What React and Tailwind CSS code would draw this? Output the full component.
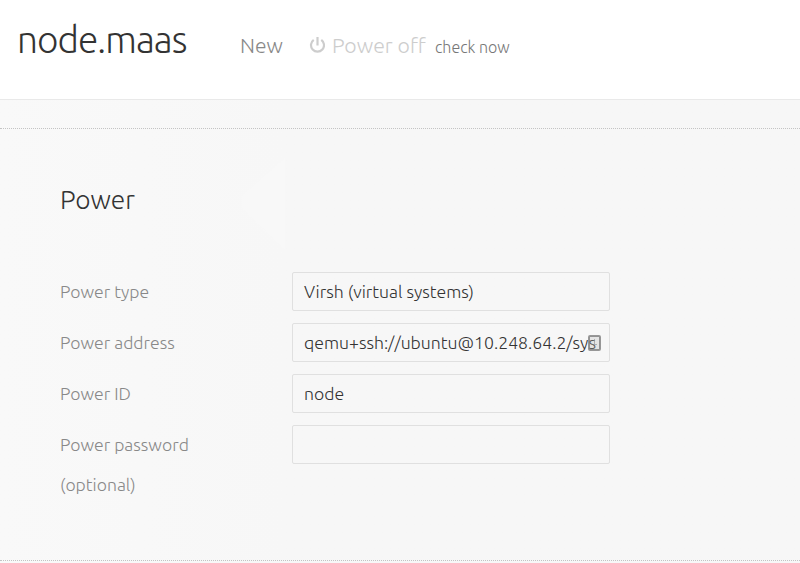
import React from "react";

const fields = [
  { label: "Power type", value: "Virsh (virtual systems)" },
  { label: "Power address", value: "qemu+ssh://ubuntu@10.248.64.2/sys", badge: true },
  { label: "Power ID", value: "node" },
  { label: "Power password (optional)", value: "" },
];

function PowerIcon() {
  return (
    <svg viewBox="0 0 16 17" className="mt-[37px] ml-[26px] h-[17px] w-4 shrink-0" fill="none" stroke="#cdcdcd" strokeWidth="2.2">
      <path d="M8.5 0v8.5" />
      <path d="M4.7 2.9a6.5 6.5 0 1 0 7.6 0" />
    </svg>
  );
}

function FieldBadge() {
  return (
    <svg viewBox="0 0 13 16" className="absolute top-[11px] left-[295px] h-4 w-[13px]" fill="none">
      <rect x="1" y="1" width="11" height="14" rx="1" stroke="#777777" strokeOpacity="0.75" strokeWidth="2" fill="#bbbbbb" fillOpacity="0.3" />
      <path d="M6.5 4v5M4 9.5h5" stroke="#777777" strokeOpacity="0.5" />
    </svg>
  );
}

function Field({ label, value, badge }) {
  return (
    <div className="flex min-h-[51px] items-start">
      <label className="w-[232px] shrink-0 pr-16 text-[17.6px] leading-10 font-light text-[#888888]">{label}</label>
      <div className="relative flex h-[39px] w-[318px] items-center rounded-[2px] border border-[#e0e0e0] pl-[11px] text-[17.65px] leading-[25px] font-light whitespace-nowrap text-[#333333]">
        {value}
        {badge && <FieldBadge />}
      </div>
    </div>
  );
}

export default function App() {
  return (
    <div className="h-[563px] w-[800px] overflow-hidden bg-linear-to-r from-[#f9f9f9] to-[#f7f7f7] to-36% font-['Ubuntu','Noto_Sans',sans-serif]">
      <header className="flex h-[100px] items-start border-b border-[#e9e9e9] bg-white font-light whitespace-nowrap">
        <h1 className="w-[222px] pt-[20px] pl-[17px] text-[37px] leading-10 tracking-[-0.95px] text-[#333333]">node.maas</h1>
        <span className="ml-[18px] w-[43px] pt-[30px] text-[21.1px] leading-[30px] text-[#888888]">New</span>
        <PowerIcon />
        <span className="ml-[7px] w-[94px] pt-[30px] text-[21.3px] leading-[30px] text-[#cdcdcd]">Power off</span>
        <span className="ml-[9px] pt-[32px] text-[16px] leading-[30px] text-[#777777]">check now</span>
      </header>
      <div className="h-[28px]" />
      <section className="relative h-[433px] border-y border-dotted border-[#c4c4c4] px-[60px] pt-[50px]">
        <svg viewBox="0 0 75 100" className="absolute top-[27px] left-[210px] h-[100px] w-[75px]">
          <path d="M75 2L32 40v12l43 42z" fill="#f8f8f8" />
        </svg>
        <h2 className="relative h-[93px] text-[26.3px] leading-10 font-light text-[#333333]">Power</h2>
        <div className="flex flex-col">
          {fields.map((f) => <Field key={f.label} {...f} />)}
        </div>
      </section>
    </div>
  );
}
